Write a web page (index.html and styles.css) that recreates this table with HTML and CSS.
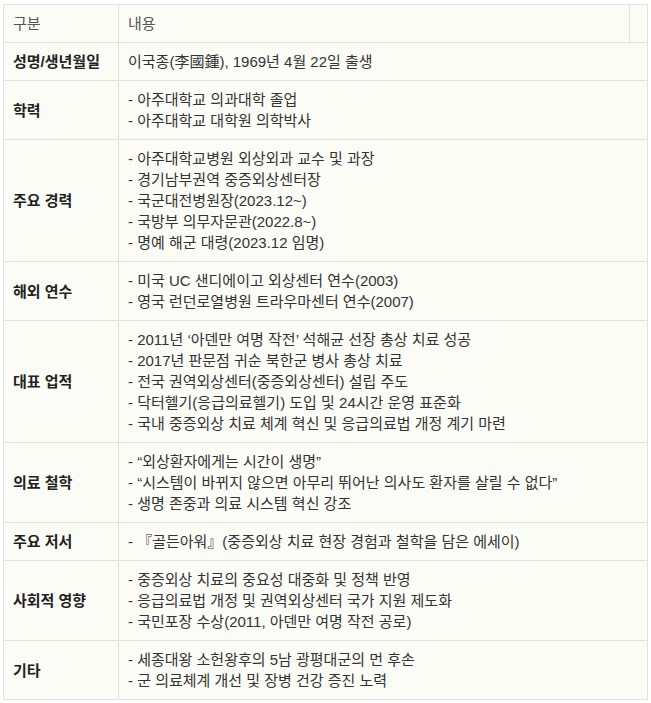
FILE: index.html
```html
<!DOCTYPE html>
<html lang="ko">
<head>
<meta charset="utf-8">
<link rel="stylesheet" href="styles.css">
</head>
<body>
<table class="info">
  <colgroup>
    <col class="c1">
    <col class="c2">
    <col class="c3">
  </colgroup>
  <thead>
    <tr><th>구분</th><th>내용</th><th></th></tr>
  </thead>
  <tbody>
    <tr><td class="k">성명/생년월일</td><td colspan="2">이국종(李國鍾), 1969년 4월 22일 출생</td></tr>
    <tr><td class="k">학력</td><td colspan="2">- 아주대학교 의과대학 졸업<br>- 아주대학교 대학원 의학박사</td></tr>
    <tr><td class="k">주요 경력</td><td colspan="2">- 아주대학교병원 외상외과 교수 및 과장<br>- 경기남부권역 중증외상센터장<br>- 국군대전병원장(2023.12~)<br>- 국방부 의무자문관(2022.8~)<br>- 명예 해군 대령(2023.12 임명)</td></tr>
    <tr><td class="k">해외 연수</td><td colspan="2">- 미국 UC 샌디에이고 외상센터 연수(2003)<br>- 영국 런던로열병원 트라우마센터 연수(2007)</td></tr>
    <tr><td class="k">대표 업적</td><td colspan="2">- 2011년 ‘아덴만 여명 작전’ 석해균 선장 총상 치료 성공<br>- 2017년 판문점 귀순 북한군 병사 총상 치료<br>- 전국 권역외상센터(중증외상센터) 설립 주도<br>- 닥터헬기(응급의료헬기) 도입 및 24시간 운영 표준화<br>- 국내 중증외상 치료 체계 혁신 및 응급의료법 개정 계기 마련</td></tr>
    <tr><td class="k">의료 철학</td><td colspan="2">- “외상환자에게는 시간이 생명”<br>- “시스템이 바뀌지 않으면 아무리 뛰어난 의사도 환자를 살릴 수 없다”<br>- 생명 존중과 의료 시스템 혁신 강조</td></tr>
    <tr><td class="k">주요 저서</td><td colspan="2">- 『골든아워』(중증외상 치료 현장 경험과 철학을 담은 에세이)</td></tr>
    <tr><td class="k">사회적 영향</td><td colspan="2">- 중증외상 치료의 중요성 대중화 및 정책 반영<br>- 응급의료법 개정 및 권역외상센터 국가 지원 제도화<br>- 국민포장 수상(2011, 아덴만 여명 작전 공로)</td></tr>
    <tr><td class="k">기타</td><td colspan="2">- 세종대왕 소헌왕후의 5남 광평대군의 먼 후손<br>- 군 의료체계 개선 및 장병 건강 증진 노력</td></tr>
  </tbody>
</table>
</body>
</html>
```
FILE: styles.css
```css
html, body {
  margin: 0;
  padding: 0;
  background: #ffffff;
}
body {
  padding: 4px 0 0 3px;
  font-family: "Liberation Sans", "Noto Sans CJK KR", sans-serif;
  font-size: 15px;
  line-height: 21px;
  color: #333333;
}
.info {
  border-collapse: collapse;
  table-layout: fixed;
  width: 644px;
  background: #fcfcf7;
}
.c1 { width: 115px; }
.c2 { width: 511px; }
.c3 { width: 18px; }
.info th,
.info td {
  border: 1px solid #e2e2df;
  padding: 8px 9px;
  text-align: left;
  vertical-align: middle;
}
.info th {
  font-weight: normal;
  color: #555555;
}
.info td.k {
  font-weight: bold;
  color: #222222;
}
```
